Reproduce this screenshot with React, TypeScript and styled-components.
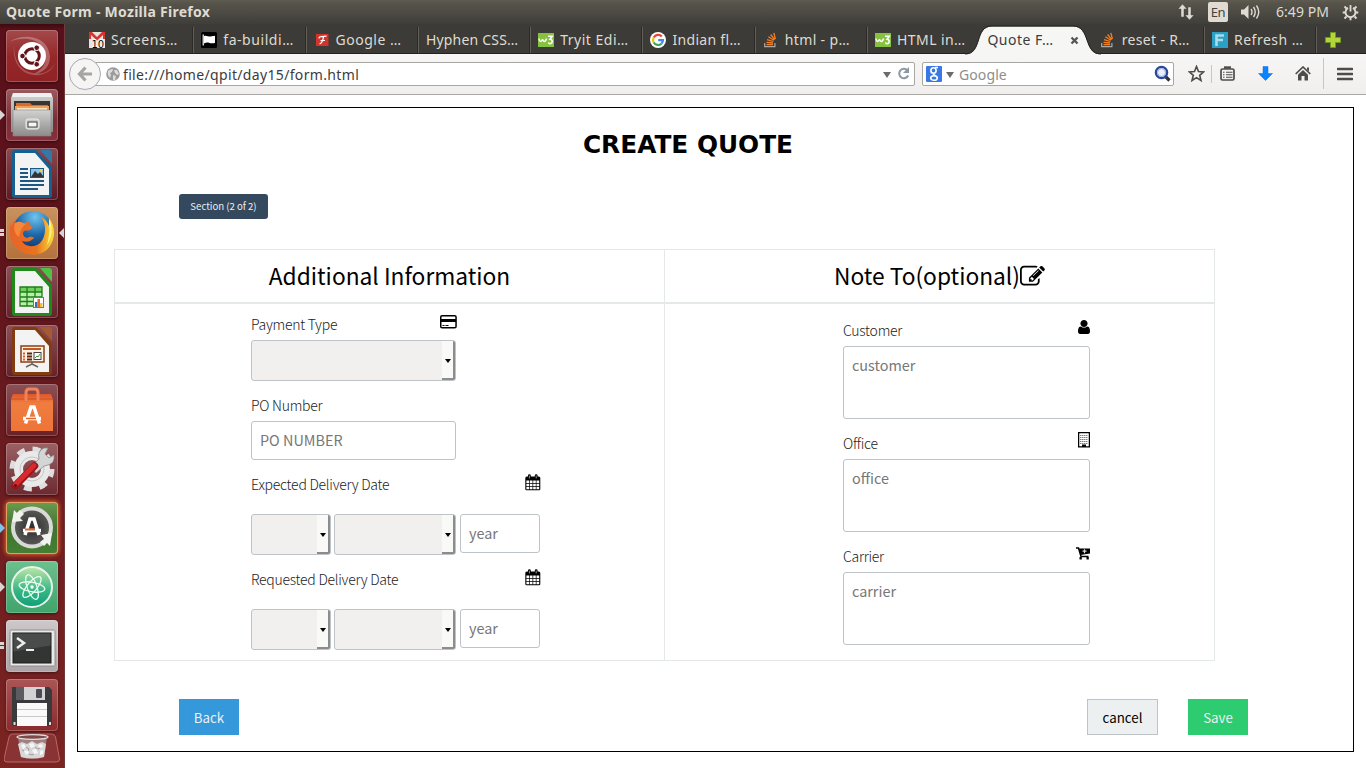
import React from 'react';
import styled, { createGlobalStyle, css } from 'styled-components';

const ui = `"Noto Sans", "Open Sans", sans-serif`;
const body = `"Noto Sans CJK SC", "Open Sans", sans-serif`;

const GlobalStyle = createGlobalStyle`
  * { box-sizing: border-box; }
  html, body { margin: 0; padding: 0; }
  body { width: 1366px; height: 768px; overflow: hidden; background: #fff; font-family: ${ui}; }
  svg { display: block; flex: none; }
`;

const Desktop = styled.div`
  display: flex;
  flex-direction: column;
  width: 1366px;
  height: 768px;
  overflow: hidden;
`;

/* ---------- system panel ---------- */

const Panel = styled.header`
  display: flex;
  align-items: center;
  flex: none;
  height: 24px;
  padding: 0 7px 0 6px;
  background: linear-gradient(#5f5d52 0, #57544b 3px, #3f3e39 100%);
  color: #dfdbd2;
`;

const PanelTitle = styled.div`
  flex: 1;
  font-size: 14px;
  line-height: 24px;
  font-weight: 700;
  letter-spacing: 0.27px;
`;

const Tray = styled.div`
  display: flex;
  align-items: center;
`;

const Language = styled.div`
  width: 20px;
  height: 20px;
  margin: 0 12px 0 13px;
  border-radius: 2px;
  background: #dfdbd2;
  color: #45433e;
  font-size: 13px;
  line-height: 20px;
  text-align: center;
  letter-spacing: -0.4px;
`;

const Clock = styled.div`
  width: 54px;
  margin: 0 12px 0 15px;
  font-size: 14px;
  line-height: 24px;
  white-space: nowrap;
  letter-spacing: 0.05px;
`;

/* ---------- launcher ---------- */

const Workspace = styled.div`
  display: flex;
  flex: 1;
  min-height: 0;
`;

const Launcher = styled.nav`
  display: flex;
  flex-direction: column;
  gap: 7px;
  flex: none;
  width: 65px;
  padding: 6px 0 0 6px;
  overflow: hidden;
  border-right: 1px solid #6e3a3c;
  background: linear-gradient(#3c0a0f 0, #59101a 5px, #5c131a 25%, #6a1b1f 55%, #7b2422 100%);
`;

const Tile = styled.div<{ $bg: string; $glow?: boolean }>`
  position: relative;
  flex: none;
  width: 52px;
  height: 52px;
  border-radius: 4px;
  background: ${p => p.$bg};
  box-shadow: ${p => p.$glow
    ? 'inset 0 0 0 1px #e0a060, 0 0 4px 1px #e2602c'
    : 'inset 0 0 0 1px rgba(255,255,255,0.22), 0 1px 3px rgba(0,0,0,0.45)'};
`;

const Running = styled.i<{ $color?: string }>`
  position: absolute;
  left: -6px;
  top: 21px;
  border: 5px solid transparent;
  border-right: 0;
  border-left-color: ${p => p.$color ?? '#d9d5d5'};
`;

const Pips = styled.i`
  position: absolute;
  left: -6px;
  top: 22px;
  width: 4px;
  height: 7px;
  border: solid #d9d5d5;
  border-width: 3px 0;
`;

const Focused = styled.i`
  position: absolute;
  right: -6px;
  top: 21px;
  border: 5px solid transparent;
  border-left: 0;
  border-right-color: #d9d5d5;
`;

const TrashSlot = styled.div`
  flex: none;
  margin: -5px 0 0 -2px;
`;

/* ---------- browser chrome ---------- */

const Browser = styled.main`
  display: flex;
  flex-direction: column;
  flex: 1;
  min-width: 0;
`;

const TabStrip = styled.div`
  display: flex;
  flex: none;
  height: 30px;
  padding-left: 16px;
  background: #3c3b37;
  border-bottom: 1px solid #23221f;
`;

const TabBox = styled.div<{ $active?: boolean; $line?: boolean }>`
  position: relative;
  display: flex;
  align-items: center;
  flex: none;
  width: 112.3px;
  height: 29px;
  padding: 3px 0 0 8px;
  gap: 6px;
  ${p => p.$line && css`
    &::after {
      content: '';
      position: absolute;
      right: -1px;
      top: 3px;
      width: 2px;
      height: 26px;
      background: linear-gradient(90deg, #2b2a27 50%, #605e57 50%);
    }
  `}
`;

const TabShape = styled.svg`
  position: absolute;
  left: -14px;
  top: 1px;
`;

const TabLabel = styled.span<{ $active?: boolean; $gap?: number }>`
  position: relative;
  color: ${p => (p.$active ? '#3c3c3c' : '#dfdbd2')};
  font-size: 14px;
  line-height: 24px;
  white-space: nowrap;
  letter-spacing: ${p => p.$gap ?? 0}px;
`;

const CloseGlyph = styled.svg`
  position: absolute;
  left: 91px;
  top: 12px;
`;

const NewTab = styled.div`
  padding: 8px 0 0 9px;
`;

const NavBar = styled.div`
  display: flex;
  align-items: center;
  flex: none;
  height: 41px;
  padding: 0 0 1px 4px;
  background: linear-gradient(#f7f6f6, #f0efed);
  border-bottom: 1px solid #aaa8a5;
`;

const BackButton = styled.div`
  position: relative;
  z-index: 1;
  display: flex;
  align-items: center;
  justify-content: center;
  width: 32px;
  height: 32px;
  border: 1px solid #a6abb1;
  border-radius: 50%;
  background: #f6f5f4;
`;

const FieldBox = styled.div<{ $w: number }>`
  display: flex;
  align-items: center;
  width: ${p => p.$w}px;
  height: 24px;
  border: 1px solid #a9a7a3;
  border-radius: 2px;
  background: #fff;
  font-size: 14px;
  line-height: 22px;
`;

const Address = styled(FieldBox)`
  margin: 0 7px 0 -8px;
  padding: 0 4px 0 12px;
`;

const AddressText = styled.span`
  flex: 1;
  padding: 2px 0 0 3px;
  color: #3c3c3c;
  white-space: nowrap;
  letter-spacing: 0.34px;
`;

const Search = styled(FieldBox)`
  padding: 0 2px 0 3px;
`;

const SearchText = styled.span`
  flex: 1;
  padding: 2px 0 0 5px;
  color: #8e8e8e;
  letter-spacing: 0.1px;
`;

const Caret = styled.i<{ $m: string }>`
  margin: ${p => p.$m};
  border: 4px solid transparent;
  border-top: 6px solid #6b6b6b;
  border-bottom: 0;
`;

const Tools = styled.div`
  display: flex;
  align-items: center;
  flex: 1;
  padding-left: 14px;
`;

const ToolRule = styled.i<{ $h: number; $m: string }>`
  width: 1px;
  height: ${p => p.$h}px;
  margin: ${p => p.$m};
  background: #c3c6ca;
`;

const Tool = styled.svg<{ $lead?: number }>`
  margin-left: ${p => p.$lead ?? 0}px;
`;

/* ---------- page ---------- */

const Page = styled.section`
  flex: 1;
  min-height: 0;
  padding: 12px 12px 16px 12px;
  background: #fff;
`;

const Frame = styled.div`
  display: flex;
  flex-direction: column;
  width: 1277px;
  height: 645px;
  border: 1px solid #000;
`;

const Title = styled.h1`
  width: 1220px;
  margin: 22px 0 0;
  color: #000;
  font: 700 24.8px/30px "DejaVu Sans", sans-serif;
  text-align: center;
`;

const SectionBadge = styled.div`
  width: 89px;
  height: 25px;
  margin: 34px 0 0 101px;
  border-radius: 3px;
  background: #34495e;
  color: #ecf0f1;
  font: 400 9.6px/25px ${body};
  text-align: center;
  white-space: nowrap;
`;

const Grid = styled.div`
  display: grid;
  grid-template-columns: 550px 550px;
  grid-template-rows: 55px 357px;
  width: 1101px;
  margin: 30px 0 0 36px;
  border: solid #e5e8e8;
  border-width: 1px 0 0 1px;
  height: 412px;
`;

const ColumnHead = styled.h2`
  display: flex;
  align-items: center;
  justify-content: center;
  height: 54px;
  margin: 0;
  border: solid #e5e8e8;
  border-width: 0 1px 2px 0;
  color: #000;
  font: 400 22.75px/52px ${body};
`;

const Column = styled.div<{ $indent: number; $top: number }>`
  height: 357px;
  margin-top: -1px;
  padding: ${p => p.$top}px 0 0 ${p => p.$indent}px;
  border: solid #e5e8e8;
  border-width: 0 1px 1px 0;
`;

const LabelRow = styled.div<{ $w: number; $h: number; $text: number; $icon: number }>`
  display: flex;
  justify-content: space-between;
  align-items: flex-start;
  width: ${p => p.$w}px;
  height: ${p => p.$h}px;
  color: #222;
  font: 300 14px/20px ${body};
  letter-spacing: -0.26px;

  label { margin-top: ${p => p.$text}px; white-space: nowrap; }
  svg { margin-top: ${p => p.$icon}px; }
`;

const control = css`
  display: block;
  margin: 0;
  border: 1px solid #bdc3c7;
  border-radius: 3px;
  background: #fff;
  color: #333;
  font: 400 14.4px/20px ${body};
  outline: none;
  &::placeholder { color: #777; opacity: 1; }
`;

const TextInput = styled.input<{ $w: number }>`
  ${control}
  width: ${p => p.$w}px;
  height: 39px;
  padding: 0 8px 2px;
`;

const NoteInput = styled.textarea`
  ${control}
  width: 247px;
  height: 73px;
  padding: 8px;
  resize: none;
`;

const SelectBox = styled.div<{ $w: number }>`
  display: flex;
  justify-content: flex-end;
  width: ${p => p.$w}px;
  height: 41px;
  border: 1px solid #bdc3c7;
  border-radius: 3px;
  background: #f1f0ee;
`;

const SelectButton = styled.div`
  display: flex;
  align-items: center;
  justify-content: center;
  width: 13px;
  height: 39px;
  padding-left: 1px;
  border: solid #8c8c8c;
  border-width: 0 2px 2px 0;
  border-radius: 0 2px 2px 0;
  background: #f9f9f7;

  &::before {
    content: '';
    border: 3px solid transparent;
    border-top: 4px solid #000;
    border-bottom: 0;
    margin-top: 3px;
  }
`;

const DateRow = styled.div`
  display: grid;
  grid-template-columns: 83px 126px 80px;
  align-items: start;
  height: 41px;
`;

const Actions = styled.div`
  display: flex;
  align-items: flex-start;
  margin: 38px 105px 0 101px;
`;

const Button = styled.button<{ $bg: string; $fg: string; $w: number; $line?: string }>`
  width: ${p => p.$w}px;
  height: 36px;
  padding: 2px 0 0;
  border: ${p => (p.$line ? `1px solid ${p.$line}` : '0')};
  background: ${p => p.$bg};
  color: ${p => p.$fg};
  font: 400 13.3px/32px ${body};

  &:nth-child(2) { margin: 0 30px 0 auto; }
`;

/* ---------- favicons ---------- */

const Gmail = () => (
  <svg width="16" height="16" viewBox="0 0 16 16">
    <path d="M0 0h16v16H0z" fill="#e6e3e0" />
    <path d="M0 0h3l5 5 5-5h3v7h-2V3L8 8.500 2 3v4H0z" fill="#d8332c" />
    <text x="2.500" y="15.500" fontSize="10" fontFamily="DejaVu Sans" fill="#000" stroke="#fff" strokeWidth="1.500" paintOrder="stroke">10</text>
  </svg>
);
const Flag = () => (
  <svg width="16" height="16" viewBox="0 0 16 16">
    <rect width="16" height="16" rx="1.5" fill="#000" />
    <path d="M2.2 2.5v11" stroke="#fff" strokeWidth="1.2" />
    <path d="M3 4.2c2-1.200 4.500.6 6.500.4s3-.7 4.500-.8v7c-2 1-4.500.4-6-.1S4.500 10.400 3 11.400z" fill="#fff" />
  </svg>
);
const RedF = () => (
  <svg width="16" height="16" viewBox="0 0 16 16">
    <rect x="2" y="2" width="12.500" height="12" fill="#d0342c" />
    <path d="M5 6.500q0-2 2.500-1.800l5-.5M9.500 4.800Q8.500 11 5.500 12M6.500 8.500h4.500" fill="none" stroke="#fff" strokeWidth="1.200" />
  </svg>
);
const W3 = () => (
  <svg width="16" height="14" viewBox="0 0 16 14">
    <rect width="16" height="14" fill="#86c140" />
    <path d="M1 5.500c.5 4 3 3.500 3.500.5.500 3 3 3.500 4-.5" fill="none" stroke="#fff" strokeWidth="1.500" />
    <path d="M10 3.200h4.200L12 6.300c3.500.2 2.500 5.200-.7 4.200l-1-.8" fill="none" stroke="#fff" strokeWidth="1.600" />
  </svg>
);
const GoogleG = () => (
  <svg width="16" height="16" viewBox="0 0 16 16">
    <circle cx="8" cy="8" r="8" fill="#fff" />
    <g fill="none" strokeWidth="2.200">
      <path d="M11.800 4.500A5 5 0 0 0 3.700 5.500" stroke="#ea4335" />
      <path d="M3.700 5.500a5 5 0 0 0 0 5" stroke="#fbbc05" />
      <path d="M3.700 10.500a5 5 0 0 0 7.700 1.200" stroke="#34a853" />
      <path d="M11.400 11.700A5 5 0 0 0 13 8.100H8.200" stroke="#4285f4" />
    </g>
  </svg>
);
const Stack = () => (
  <svg width="16" height="16" viewBox="0 0 16 16">
    <path d="M1.700 11v3.700h10.200V11" fill="none" stroke="#a9a9a9" strokeWidth="1.200" />
    <path d="M3.500 12.600h6.500M3.500 10.300l6.500.7M4 7.700l6.300 1.800M5.300 4.800l5.700 3.400M7.600 2.500l4.100 5.100M10.800.8l1.600 6.200" stroke="#f48024" strokeWidth="1.300" />
  </svg>
);
const Refresh = () => (
  <svg width="16" height="16" viewBox="0 0 16 16">
    <path d="M0 0h16v16H0z" fill="#2b9fc4" />
    <path d="M4.500 14V3.500H12M4.500 8H11" stroke="#a9dbea" strokeWidth="2.600" fill="none" />
  </svg>
);

/* ---------- launcher artwork ---------- */

const Ubuntu = () => (
  <svg width="52" height="52" viewBox="0 0 52 52">
    <path d="M3 12C18 2 43 6 44 27c0 10-7 16-16 17 7-4 12-9 12-17C40 12 22 4 3 12z" fill="#fff" opacity=".27" />
    <path d="M8 15c-2 17 7 32 26 30 9-2 13-7 15-12-5 9-13 12-22 10C15 41 8 32 8 15z" fill="#fff" opacity=".22" />
    <circle cx="26" cy="26" r="14" fill="#fff" />
    <circle cx="26" cy="26" r="7.300" fill="none" stroke="#651318" strokeWidth="3" />
    <g stroke="#fff" strokeWidth="1.300"><path d="M26 26L16 26M26 26l5-9M26 26l5 9" /></g>
    <circle cx="26" cy="26" r="5" fill="#fff" />
    <g fill="#651318" stroke="#fff"><circle cx="16.500" cy="26" r="2.800" /><circle cx="30.700" cy="17.700" r="2.800" /><circle cx="30.700" cy="34.300" r="2.800" /></g>
  </svg>
);
const Files = () => (
  <svg width="52" height="52" viewBox="0 0 52 52">
    <defs><linearGradient id="cab" x1="0" y1="0" x2="0" y2="1"><stop offset="0" stopColor="#d2d2d2" /><stop offset="1" stopColor="#8b8b89" /></linearGradient></defs>
    <path d="M7 4h38l2 5v34H5V9z" fill="url(#cab)" />
    <path d="M6 8h40v-1l-1-3H7z" fill="#f0f0f0" />
    <path d="M8 12h36v10H8z" fill="#3b3531" />
    <path d="M10 14h14l2 2h16v6H10z" fill="#dd6a2b" /><path d="M9 17h34v5H9z" fill="#f0a156" /><path d="M11 19h30v3H11z" fill="#fbe3c0" />
    <path d="M7 21h38v26H7z" fill="url(#cab)" stroke="#888" strokeWidth=".6" />
    <rect x="20" y="30" width="13" height="10" rx="2" fill="#c9c9c9" stroke="#eee" />
    <rect x="22" y="33" width="9" height="5" fill="#f6f6f6" stroke="#444" />
  </svg>
);
const Sheet = ({ color, dark, children }: { color: string; dark: string; children: React.ReactNode }) => (
  <svg width="52" height="52" viewBox="0 0 52 52">
    <path d="M6 5q0-3 3-3h21l16 17v28q0 3-3 3H9q-3 0-3-3z" fill={dark} />
    <path d="M9 5h20l14 16v26H9z" fill="#f3f3f3" />
    <path d="M34 2h9q3 0 3 3v11z" fill={color} />
    {children}
  </svg>
);
const Writer = () => (
  <Sheet color="#3477a8" dark="#155f92">
    <path d="M14 21h8M14 25h8M14 29h8M14 33h24M14 37h24M14 41h18" stroke="#1d5784" strokeWidth="1.800" />
    <rect x="24.500" y="20.500" width="13" height="9" fill="#8cc3e8" stroke="#1d5784" /><path d="M25 29l4-6 3 3 2-2 4 5z" fill="#333" /><circle cx="35" cy="22.500" r="1.400" fill="#f5d33b" />
  </Sheet>
);
const Calc = () => (
  <Sheet color="#4fc144" dark="#1f8a1b">
    <path d="M14 21h22v19H14z" fill="#b9f0a8" /><path d="M14 21h22v5H14z" fill="#6fd05f" />
    <path d="M14 21h22v19H14zM21 21v19M29 21v19M14 26h22M14 31h22M14 35.500h22" fill="none" stroke="#1e7d1a" strokeWidth="1.300" />
    <rect x="27.500" y="31.500" width="10" height="10" fill="#fff" stroke="#777" /><path d="M29 36h2.500v5H29z" fill="#2a6fc0" /><path d="M31.500 33H34v8h-2.500z" fill="#e8692b" /><path d="M34 37h2.500v4H34z" fill="#f3c52a" />
  </Sheet>
);
const Impress = () => (
  <Sheet color="#a65a33" dark="#833c12">
    <rect x="15" y="21" width="23" height="16" fill="#fff1e6" stroke="#8a3e12" strokeWidth="1.500" />
    <path d="M17 24h18" stroke="#c05a1e" strokeWidth="2" /><path d="M17 28.500h2M17 31.500h2M17 34.500h2" stroke="#d85f2a" strokeWidth="1.800" /><path d="M21 28.500h5M21 31.500h5M21 34.500h5" stroke="#5b2a10" strokeWidth="1.800" />
    <rect x="28" y="27.500" width="7" height="7" fill="#fff" stroke="#444" /><path d="M29 33l2-2 1 1 2-3" stroke="#3a9d2c" fill="none" />
    <path d="M26 37v2l-6 3M26 39l6 3" stroke="#666" strokeWidth="1.500" fill="none" />
  </Sheet>
);
const Firefox = () => (
  <svg width="52" height="52" viewBox="0 0 52 52">
    <defs>
      <radialGradient id="sea" cx=".55" cy=".15" r=".9"><stop offset="0" stopColor="#6fc4ee" /><stop offset=".5" stopColor="#1f66a8" /><stop offset="1" stopColor="#0e2b5c" /></radialGradient>
      <linearGradient id="fox" x1="0" y1="0" x2="1" y2="0"><stop offset="0" stopColor="#e8622a" /><stop offset=".6" stopColor="#e9731f" /><stop offset="1" stopColor="#fbdc3a" /></linearGradient>
    </defs>
    <circle cx="27" cy="24" r="20" fill="url(#sea)" />
    <path d="M5 15C3 22 3 33 9 39c9 12 28 11 35 0 6-9 5-21-1-28 1 4 1 6 0 8-2-5-5-8-8-9 6 8 5 20-1 26-6 5-15 4-18-2 5 2 9 0 12-3-2-2-5-1-7 0-4-1-5-5-3-7 2-1 4 0 6-1l3-3c-3-1-5-2-4-6-3 1-5 2-6 4-3-1-5 0-7 1-1-2-1-4 0-7-3 3-4 5-5 8z" fill="url(#fox)" />
    <path d="M43 11c4 8 4 19-2 27 2-8 3-14 2-19z" fill="#fdf27a" />
    <path d="M9 16c5-3 8 0 11 1-3 2-6 6-7 13-4-3-6-8-4-14z" fill="#f4893c" />
  </svg>
);
const Bag = () => (
  <svg width="52" height="52" viewBox="0 0 52 52">
    <defs><linearGradient id="bag" x1="0" y1="0" x2="0" y2="1"><stop offset="0" stopColor="#e0572a" /><stop offset=".25" stopColor="#ef7d3f" /><stop offset="1" stopColor="#ee7437" /></linearGradient></defs>
    <path d="M7 10h38l2 6v31H5V15z" fill="url(#bag)" />
    <path d="M5 15h42" stroke="#c94f26" />
    <path d="M20 17v-8q0-4 3-4h6q3 0 3 4v8" fill="none" stroke="#ef8257" strokeWidth="3" />
    <path d="M19.500 39.500l5.500-16.500h3l5.500 16.500M17 34.500h18" stroke="#fff" strokeWidth="3.500" fill="none" /><path d="M20 34.500h10" stroke="#e0682c" strokeWidth="1.500" />
  </svg>
);
const Settings = () => (
  <svg width="52" height="52" viewBox="0 0 52 52">
    <circle cx="26" cy="26" r="20" fill="none" stroke="#dedede" strokeWidth="5" strokeDasharray="7.850 7.850" />
    <circle cx="26" cy="26" r="13.500" fill="none" stroke="#e9e9e9" strokeWidth="9" />
    <circle cx="26" cy="26" r="12" fill="none" stroke="#c6c6c6" />
    <path d="M25 23l8-7q-2-8 5-11l4 0-3 6 4 4 5-3q1 8-6 10l-4 1-8 7z" fill="#d4d6d6" stroke="#8b8b8b" strokeWidth=".8" />
    <path d="M9.500 42.500L28.500 23" stroke="#9c1519" strokeWidth="7.500" strokeLinecap="round" />
    <path d="M9.500 41.500L28 22.500" stroke="#d62a2e" strokeWidth="4.800" strokeLinecap="round" />
    <circle cx="9.500" cy="42.500" r="1.500" fill="#5c1013" />
  </svg>
);
const Updater = () => (
  <svg width="52" height="52" viewBox="0 0 52 52">
    <defs><radialGradient id="upd"><stop offset="0" stopColor="#2d2d2d" /><stop offset="1" stopColor="#5b5b59" /></radialGradient></defs>
    <circle cx="26" cy="25.500" r="19" fill="url(#upd)" stroke="#d9d9d6" strokeWidth="4" />
    <path d="M6 20l2-12 3 3 3-3 4 4-4 4 3 3zM46 31l-2 13-3-3-3 3-4-4 4-3-3-4z" fill="#f2f2f0" />
    <path d="M19 33l5-16h4l5 16M17 28.500h18" stroke="#fff" strokeWidth="3.500" fill="none" /><path d="M19 27.500h10" stroke="#e8642a" strokeWidth="2" />
  </svg>
);
const Atom = () => (
  <svg width="52" height="52" viewBox="0 0 52 52">
    <defs><linearGradient id="atm" x1="0" y1="0" x2="0" y2="1"><stop offset="0" stopColor="#bfe6a8" /><stop offset=".6" stopColor="#35b584" /><stop offset="1" stopColor="#0fa077" /></linearGradient></defs>
    <circle cx="26" cy="26" r="20" fill="url(#atm)" stroke="#e9f3ee" strokeWidth="2" />
    <g fill="none" stroke="#e8fff4" strokeWidth="1.300"><ellipse cx="26" cy="26" rx="13" ry="4.800" transform="rotate(10 26 26)" /><ellipse cx="26" cy="26" rx="13" ry="4.800" transform="rotate(70 26 26)" /><ellipse cx="26" cy="26" rx="13" ry="4.800" transform="rotate(130 26 26)" /></g>
    <circle cx="26" cy="26" r="1.700" fill="#fff" />
  </svg>
);
const Terminal = () => (
  <svg width="52" height="52" viewBox="0 0 52 52">
    <rect x="4" y="10" width="45" height="36" rx="1.500" fill="#e9e9e9" stroke="#8e8e8e" />
    <rect x="7" y="13" width="38" height="30" fill="#333534" stroke="#191a1a" />
    <path d="M7.500 13.500h37v12l-37 6z" fill="#4a4c4b" />
    <path d="M11 18l7 5-7 5" fill="none" stroke="#eee" strokeWidth="2.500" /><path d="M20 30h8" stroke="#eee" strokeWidth="2" />
  </svg>
);
const Floppy = () => (
  <svg width="52" height="52" viewBox="0 0 52 52">
    <path d="M6 8h37l3 3v36H6z" fill="#3a3a3c" />
    <path d="M18 8h21v13H18z" fill="#d2d2d4" /><path d="M10 8h8v13h-8z" fill="#5c5c60" /><rect x="30" y="10" width="6" height="9" rx="1" fill="#4a4b52" />
    <path d="M11 24h30v23H11z" fill="#fafafa" /><path d="M11 30.500h30M11 37.500h30" stroke="#c9c9c9" />
    <path d="M7.500 43h2v3h-2zM43 43h2v3h-2z" fill="#ddd" />
  </svg>
);
const Trash = () => (
  <svg width="56" height="32" viewBox="0 0 56 32">
    <path d="M8.500 1h39q3 0 4 3l4 22q0 3-3 3H3q-3 0-3-3L5 4q1-3 3.500-3z" fill="#8a3334" stroke="#b66a68" />
    <path d="M14 4l3 20q11 3 23 0l3-20z" fill="#a07f7f" />
    <path d="M14 11l4-2 5 2 5-3 5 3 5-2 4 2-2 13q-12 3-23 0z" fill="#d9d8d8" />
    <path d="M17 12l3-1 2 3-3 2zM25 11l4-1 2 3-4 2zM34 12l4-1 1 3-4 1zM20 18l4-1 1 3-3 2zM28 17l4-1 2 4-4 1zM36 18l3-1v4l-3 1z" fill="#f6f6f6" />
    <path d="M22 14l3 2-1 2M31 14l3 2 2-1M25 21l3 1 2-1M18 17l2 1" fill="none" stroke="#8f8c8c" strokeWidth=".8" />
    <ellipse cx="28.500" cy="4" rx="15.500" ry="2.300" fill="#7d4a4a" stroke="#e4dede" strokeWidth="1.200" />
  </svg>
);

/* ---------- form icons ---------- */

const CardIcon = () => (
  <svg width="17" height="14" viewBox="0 0 17 14">
    <rect x=".75" y=".75" width="15.300" height="12" rx="1.300" fill="#fff" stroke="#000" strokeWidth="1.500" />
    <path d="M1 4h15v3H1z" fill="#000" /><path d="M2.500 10.500h2M5.500 10.500h3" stroke="#000" />
  </svg>
);
const CalendarIcon = () => (
  <svg width="16" height="17" viewBox="0 0 16 17">
    <path d="M.3 4q0-1.500 1.500-1.500h12q1.500 0 1.500 1.500v11q0 1.300-1.300 1.300H1.600Q.3 16.300.3 15z" fill="#000" />
    <path d="M1.400 6.500h2.800v2.700H1.400zM4.900 6.500h2.600v2.700H4.900zM8.200 6.500h2.600v2.700H8.200zM11.500 6.500h2.700v2.700h-2.700zM1.400 9.900h2.800v2.300H1.400zM4.900 9.900h2.600v2.300H4.900zM8.200 9.900h2.600v2.300H8.200zM11.500 9.900h2.700v2.300h-2.700zM1.400 12.900h2.800v2.300H1.400zM4.900 12.900h2.600v2.300H4.900zM8.200 12.900h2.600v2.300H8.200zM11.500 12.900h2.700v2.300h-2.700z" fill="#fff" />
    <path d="M4.400 1.600v2.800M11.200 1.600v2.800" stroke="#000" strokeWidth="2.800" strokeLinecap="round" /><path d="M4.400 1.600v2.800M11.200 1.600v2.800" stroke="#bbb" strokeWidth=".8" />
  </svg>
);
const UserIcon = () => (
  <svg width="12" height="14" viewBox="0 128 1280 1536" preserveAspectRatio="none">
    <path d="M1280 1399q0 109-62.500 187t-150.500 78h-854q-88 0-150.500-78t-62.500-187q0-85 8.500-160.500t31.500-152 58.500-131 94-89 134.500-34.500q131 128 313 128t313-128q76 0 134.500 34.500t94 89 58.500 131 31.500 152 8.500 160.500zm-256-887q0 159-112.500 271.500t-271.500 112.500-271.500-112.500-112.500-271.500 112.500-271.500 271.500-112.500 271.500 112.500 112.500 271.500z" />
  </svg>
);
const EditIcon = () => (
  <svg width="25" height="25" viewBox="0 0 1792 1792">
    <path d="M888 1184l116-116-152-152-116 116v56h96v96h56zm440-720q-16-16-33 1l-350 350q-17 17-1 33t33-1l350-350q17-17 1-33zm80 594v190q0 119-84.500 203.500t-203.500 84.500h-832q-119 0-203.500-84.500t-84.500-203.500v-832q0-119 84.500-203.500t203.500-84.500h832q63 0 117 25 15 7 18 23 3 17-9 29l-49 49q-14 14-32 8-23-6-45-6h-832q-66 0-113 47t-47 113v832q0 66 47 113t113 47h832q66 0 113-47t47-113v-126q0-13 9-22l64-64q15-15 35-7t20 29zm-96-738l288 288-672 672h-288v-288zm444 132l-92 92-288-288 92-92q28-28 68-28t68 28l152 152q28 28 28 68t-28 68z" />
  </svg>
);
const BuildingIcon = () => (
  <svg width="12" height="16" viewBox="0 0 12 16">
    <path d="M.6.6h10.800v14.200H.6z" fill="#fff" stroke="#000" strokeWidth="1.300" />
    <path d="M2.200 3.500h8M2.200 5.500h8M2.200 7.500h8M2.200 9.500h8M2.200 11.500h8" stroke="#6b5f58" strokeDasharray="1.200 .8" />
    <path d="M4 12.500h4V15H4z" />
  </svg>
);
const CartIcon = () => (
  <svg width="14" height="13" viewBox="0 0 14 13">
    <path d="M0 1h2.500l2.500 8.500h7.500" fill="none" stroke="#000" strokeWidth="1.500" />
    <path d="M3 1.500h11v5L4.500 8z" /><path d="M8.500 2.200v4M6.500 4.200h4" stroke="#ddd" strokeWidth="1.200" />
    <path d="M3.500 10h2.300v2.500H3.500zM10.500 10h2.300v2.500h-2.300z" />
  </svg>
);

/* ---------- composition ---------- */

const tabs: { icon?: React.ReactNode; label: string; gap?: number; active?: boolean; line?: boolean }[] = [
  { icon: <Gmail />, label: 'Screens…', gap: 0.6, line: true },
  { icon: <Flag />, label: 'fa-buildi…', gap: 0.55, line: true },
  { icon: <RedF />, label: 'Google …', gap: 0.5, line: true },
  { label: 'Hyphen CSS…', gap: 0.2, line: true },
  { icon: <W3 />, label: 'Tryit Edi…', gap: 0.5, line: true },
  { icon: <GoogleG />, label: 'Indian fl…', gap: 0.3, line: true },
  { icon: <Stack />, label: 'html - p…', gap: 0.35, line: true },
  { icon: <W3 />, label: 'HTML in…', gap: 0.4 },
  { label: 'Quote F…', gap: 0.5, active: true },
  { icon: <Stack />, label: 'reset - R…', gap: 0.35, line: true },
  { icon: <Refresh />, label: 'Refresh …', gap: 0.5, line: true },
];

const Select = ({ w }: { w: number }) => (
  <SelectBox $w={w}><SelectButton /></SelectBox>
);

const DateFields = () => (
  <DateRow>
    <Select w={80} />
    <Select w={122} />
    <TextInput $w={80} placeholder="year" />
  </DateRow>
);

export default function App() {
  return (
    <Desktop>
      <GlobalStyle />
      <Panel>
        <PanelTitle>Quote Form - Mozilla Firefox</PanelTitle>
        <Tray>
          <svg width="18" height="18" viewBox="0 0 18 18" fill="#dfdbd2">
            <path d="M5.500 1l4.500 5H7v8H4V6H1zM12.500 17L8 12h3V4h3v8h3z" stroke="#4a4842" strokeWidth=".5" />
          </svg>
          <Language>En</Language>
          <svg width="21" height="18" viewBox="0 0 21 18">
            <path d="M1 6.500h3L8.500 2v14L4 11.500H1z" fill="#dfdbd2" />
            <path d="M11 6q2 3 0 6M13.500 4q3.500 5 0 10M16.500 2.500q4.500 6.500 0 13" fill="none" stroke="#dfdbd2" strokeWidth="1.400" />
          </svg>
          <Clock>6:49 PM</Clock>
          <svg width="17" height="17" viewBox="0 0 17 17" fill="none" stroke="#dfdbd2">
            <path d="M6 3.900a5 5 0 1 0 5 0" strokeWidth="1.900" /><path d="M8.500 1v6.500" strokeWidth="1.800" />
            <path d="M2.500 2.500l2 2M14.500 2.500l-2 2M.7 8.500h2.800M13.500 8.500h2.800M2.500 14.500l2-2M14.500 14.500l-2-2M8.500 13.500v2.800" strokeWidth="1.900" />
          </svg>
        </Tray>
      </Panel>
      <Workspace>
        <Launcher>
          <Tile $bg="linear-gradient(#a34a4c,#96282a 50%,#8f2224)"><Ubuntu /></Tile>
          <Tile $bg="linear-gradient(#9a5a5f,#7a2c35 60%,#86303c)"><Running /><Files /></Tile>
          <Tile $bg="linear-gradient(#8a4a4f,#5c1a22)"><Writer /></Tile>
          <Tile $bg="linear-gradient(#c9925e,#b4713c)"><Pips /><Firefox /><Focused /></Tile>
          <Tile $bg="linear-gradient(#8c5055,#64212a)"><Calc /></Tile>
          <Tile $bg="linear-gradient(#8c5055,#64212a)"><Impress /></Tile>
          <Tile $bg="linear-gradient(#8c5055,#6a2026)"><Bag /></Tile>
          <Tile $bg="linear-gradient(#9a6265,#6c2a30)"><Settings /></Tile>
          <Tile $bg="linear-gradient(#6c9a50,#3f7430 50%,#467f33)" $glow><Running $color="#7cc4ee" /><Updater /></Tile>
          <Tile $bg="linear-gradient(#6cc08e,#3fa46b)"><Running /><Atom /></Tile>
          <Tile $bg="linear-gradient(#cfc8ca,#aaa3a7)"><Pips /><Terminal /></Tile>
          <Tile $bg="linear-gradient(#ab5556,#8a2a2c)"><Floppy /></Tile>
          <TrashSlot><Trash /></TrashSlot>
        </Launcher>
        <Browser>
          <TabStrip>
            {tabs.map(t => (
              <TabBox key={t.label} $line={t.line}>
                {t.active && (
                  <TabShape width="140" height="30" viewBox="0 0 140 30">
                    <path d="M0 29.500C18 29.500 9 1.500 27 1.500H108C126 1.500 118 29.500 136 29.500V30H0z" fill="#f6f6f5" />
                    <path d="M0 29C18 29 9 1 27 1H108C126 1 118 29 136 29" fill="none" stroke="#23221f" />
                  </TabShape>
                )}
                {t.icon}
                <TabLabel $active={t.active} $gap={t.gap}>{t.label}</TabLabel>
                {t.active && (
                  <CloseGlyph width="9" height="9" viewBox="0 0 9 9"><path d="M1.500 1.500l6 6M7.500 1.500l-6 6" stroke="#555" strokeWidth="2.300" /></CloseGlyph>
                )}
              </TabBox>
            ))}
            <NewTab>
              <svg width="16" height="16" viewBox="0 0 16 16"><path d="M5.500.5h5v5h5v5h-5v5h-5v-5h-5v-5h5z" fill="#b4d43a" stroke="#6d9a1f" /></svg>
            </NewTab>
          </TabStrip>
          <NavBar>
            <BackButton>
              <svg width="16" height="16" viewBox="0 0 16 16"><path d="M8.500 1.500L2.500 8l6 6.500M3 8h12" fill="none" stroke="#a5a5a5" strokeWidth="3.200" /></svg>
            </BackButton>
            <Address $w={822}>
              <svg width="14" height="14" viewBox="0 0 14 14">
                <circle cx="7" cy="7" r="6.800" fill="#9b9b9b" />
                <path d="M2 4q3-2.500 5-2L6 5 4 6l1 2-1 3Q1 8 2 4zM8 3l3 0 2 4-2 1-2-2zM7 8l3 1-1 4H7z" fill="#dcdcdc" />
              </svg>
              <AddressText>file:///home/qpit/day15/form.html</AddressText>
              <Caret $m="2px 6px 0 0" />
              <svg width="13" height="13" viewBox="0 0 13 13"><path d="M10.500 3.500A4.700 4.700 0 1 0 11.200 8.500" fill="none" stroke="#8b99a5" strokeWidth="2" /><path d="M12 0v6H6z" fill="#8b99a5" /></svg>
            </Address>
            <Search $w={252}>
              <svg width="16" height="16" viewBox="0 0 16 16">
                <rect width="16" height="16" rx="1" fill="#3b78e7" />
                <g fill="none" stroke="#fff" strokeWidth="1.600"><ellipse cx="7.500" cy="4.500" rx="2.600" ry="2.700" /><ellipse cx="8" cy="12" rx="3.300" ry="2.300" /><path d="M9 1.500h3M8 7.200c-2 1.200 1 1.800 1.500 2.700" /></g>
              </svg>
              <Caret $m="2px 0 0 4px" />
              <SearchText>Google</SearchText>
              <svg width="17" height="17" viewBox="0 0 17 17"><path d="M11 11l4.500 4.500" stroke="#333" strokeWidth="3.200" /><circle cx="7.500" cy="7.500" r="5.700" fill="#e8f0fc" stroke="#2d4795" strokeWidth="2.200" /><circle cx="7.500" cy="7.500" r="4" fill="none" stroke="#93a7d8" /></svg>
            </Search>
            <Tools>
              <Tool width="17" height="17" viewBox="0 0 17 17"><path d="M8.500 1.500l2 5 5.200.4-4 3.400 1.300 5.200-4.500-2.900L4 15.500l1.300-5.200-4-3.400 5.200-.4z" fill="none" stroke="#4c4c4c" strokeWidth="1.600" /></Tool>
              <ToolRule $h={18} $m="0 8px 0 6px" />
              <Tool width="15" height="15" viewBox="0 0 15 15" fill="none" stroke="#4c4c4c"><rect x="1" y="3" width="13" height="11" rx="1.500" strokeWidth="1.700" /><path d="M4 1.500h7" strokeWidth="2.400" /><path d="M3 6.200h1.500M6 6.200h6.500M3 8.700h1.500M6 8.700h6.500M3 11.200h1.500M6 11.200h6.500" strokeWidth="1.100" /></Tool>
              <Tool $lead={23} width="15" height="15" viewBox="0 0 15 15"><path d="M5 .5h5v7h4.500l-7 7-7-7H5z" fill="#0a84ff" stroke="#0873e0" strokeWidth=".5" /></Tool>
              <Tool $lead={22} width="16" height="15" viewBox="0 0 16 15"><path d="M.7 8L8 1l7.300 7" fill="none" stroke="#4c4c4c" strokeWidth="1.700" /><path d="M8 4l5 4.700V14.500H9.500V10h-3v4.500H3V8.700zM12 1.500h2v4l-2-2z" fill="#4c4c4c" /></Tool>
              <ToolRule $h={31} $m="0 13px 0 12px" />
              <Tool width="16" height="14" viewBox="0 0 16 14"><path d="M1 2h14M1 7h14M1 12h14" stroke="#4c4c4c" strokeWidth="2.600" strokeLinecap="round" /></Tool>
            </Tools>
          </NavBar>
          <Page>
            <Frame>
              <Title>CREATE QUOTE</Title>
              <SectionBadge>Section (2 of 2)</SectionBadge>
              <Grid>
                <ColumnHead>Additional Information</ColumnHead>
                <ColumnHead>Note To(optional)<EditIcon /></ColumnHead>
                <Column $indent={136} $top={0}>
                  <LabelRow $w={206} $h={36} $text={10} $icon={11}><label>Payment Type</label><CardIcon /></LabelRow>
                  <Select w={205} />
                  <LabelRow $w={205} $h={40} $text={14} $icon={0}><label>PO Number</label></LabelRow>
                  <TextInput $w={205} placeholder="PO NUMBER" />
                  <LabelRow $w={290} $h={54} $text={14} $icon={14}><label>Expected Delivery Date</label><CalendarIcon /></LabelRow>
                  <DateFields />
                  <LabelRow $w={290} $h={54} $text={14} $icon={14}><label>Requested Delivery Date</label><CalendarIcon /></LabelRow>
                  <DateFields />
                </Column>
                <Column $indent={178} $top={2}>
                  <LabelRow $w={247} $h={40} $text={14} $icon={14}><label>Customer</label><UserIcon /></LabelRow>
                  <NoteInput placeholder="customer" />
                  <LabelRow $w={247} $h={40} $text={14} $icon={13}><label>Office</label><BuildingIcon /></LabelRow>
                  <NoteInput placeholder="office" />
                  <LabelRow $w={247} $h={40} $text={14} $icon={15}><label>Carrier</label><CartIcon /></LabelRow>
                  <NoteInput placeholder="carrier" />
                </Column>
              </Grid>
              <Actions>
                <Button $w={60} $bg="#3498db" $fg="#ecf0f1">Back</Button>
                <Button $w={71} $bg="#ecf0f1" $fg="#000" $line="#bdc3c7">cancel</Button>
                <Button $w={60} $bg="#2ecc71" $fg="#ecf0f1">Save</Button>
              </Actions>
            </Frame>
          </Page>
        </Browser>
      </Workspace>
    </Desktop>
  );
}
